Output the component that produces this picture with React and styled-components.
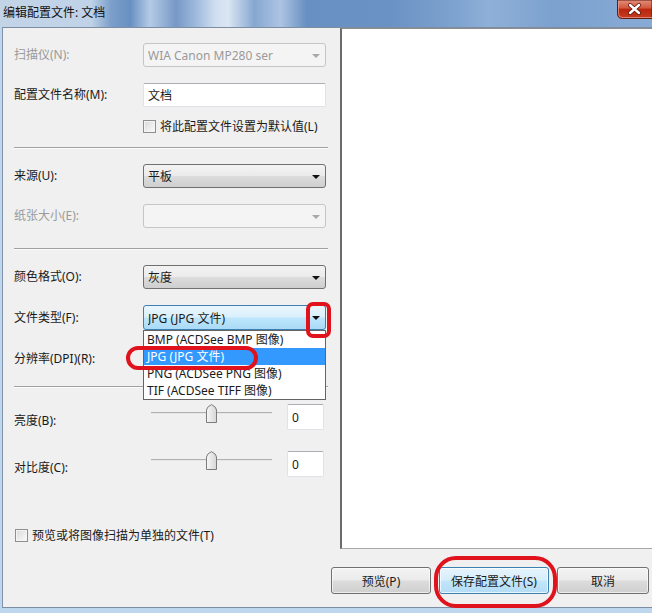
import React from 'react'
import styled, { createGlobalStyle, css } from 'styled-components'

const GlobalStyle = createGlobalStyle`
  html, body { margin: 0; padding: 0; background: #fff; }
  body {
    font-family: "Noto Sans", "Noto Sans CJK SC", sans-serif;
    font-size: 12px;
    color: #1a1a1a;
  }
`

const Window = styled.div`
  width: 652px;
  height: 613px;
  display: flex;
  flex-direction: column;
  background: #bfd6ef;
`

const TitleBar = styled.div`
  height: 27px;
  flex: none;
  display: flex;
  justify-content: space-between;
  padding-left: 3px;
  background: linear-gradient(90deg, #c3d4e7 0%, #bfd2e7 14%, #7c9fca 17%, #6890c2 20%, #b4cbe6 23%, #7798c6 27%, #9db9dc 30%, #cfdef0 33%, #dbe6f3 35%, #86a7d0 39%, #adc4e3 43%, #6890c2 47%, #6a92c4 60%, #7ea3cf 70%, #8fb0d8 75%, #7ca1ce 85%, #88abd6 100%);
`

const Title = styled.span`
  font-size: 12px;
  line-height: 26px;
  color: #111;
`

const CloseArt = styled.svg`
  display: block;
  flex: none;
`

const Client = styled.div`
  flex: 1;
  margin: 0 0 5px 2px;
  border-left: 1px solid #8193a8;
  border-top: 1px solid #7d8ea3;
  border-bottom: 1px solid #7d8ea3;
  background: #f0f0f0;
  display: grid;
  grid-template-columns: 337px 1fr;
  grid-template-rows: 521px 1fr;
`

const Form = styled.div`
  display: flex;
  flex-direction: column;
  padding: 15px 0 0 11px;
`

const Row = styled.div`
  position: relative;
  display: flex;
  align-items: center;
  height: ${p => p.$h || 24}px;
  margin-top: ${p => p.$mt || 0}px;
  flex: none;
`

const Label = styled.span`
  width: 129px;
  flex: none;
  white-space: nowrap;
  line-height: 16px;
  color: ${p => (p.$disabled ? '#9a9a9a' : '#1a1a1a')};
  padding-top: ${p => p.$pt || 0}px;
`

const comboLooks = {
  normal: css`
    border: 1px solid #707070;
    background: linear-gradient(180deg, #f3f3f3 0%, #ebebeb 48%, #dcdcdc 52%, #cfcfcf 100%);
    color: #1a1a1a;
  `,
  disabled: css`
    border: 1px solid #c3c6c9;
    background: #f4f4f4;
    color: #9a9a9a;
  `,
  hot: css`
    border: 1px solid #3c7fb1;
    background: linear-gradient(180deg, #eaf6fd 0%, #d9f0fc 48%, #bee6fd 52%, #a9daf6 100%);
    color: #1a1a1a;
  `,
}

const Combo = styled.div`
  width: 183px;
  height: 100%;
  box-sizing: border-box;
  border-radius: 3px;
  display: flex;
  align-items: center;
  padding: 0 0 0 4px;
  white-space: nowrap;
  ${p => comboLooks[p.$look || 'normal']}
`

const ComboText = styled.span`
  flex: 1;
  overflow: hidden;
`

const Arrow = styled.span`
  width: 0;
  height: 0;
  margin: 1px 5px 0 0;
  border-left: 4px solid transparent;
  border-right: 4px solid transparent;
  border-top: 4px solid ${p => (p.$disabled ? '#a8a8a8' : '#111')};
`

const TextBox = styled.div`
  width: ${p => p.$w || 183}px;
  height: 100%;
  box-sizing: border-box;
  background: #fff;
  border: 1px solid #dfe3e8;
  border-top-color: #abadb3;
  border-radius: 2px;
  display: flex;
  align-items: center;
  padding-left: 4px;
  color: #1a1a1a;
`

const Check = styled.span`
  width: 13px;
  height: 13px;
  box-sizing: border-box;
  flex: none;
  border: 1px solid #8e8f8f;
  background: linear-gradient(135deg, #d8d8d8 0%, #f2f2f2 70%, #fafafa 100%);
  box-shadow: inset 0 0 0 1px #f4f4f4;
  margin-right: 4px;
`

const CheckRow = styled(Row)`
  padding-left: ${p => p.$indent || 0}px;
`

const Separator = styled.div`
  width: 314px;
  height: 0;
  margin-top: ${p => p.$mt}px;
  border-top: 1px solid #a0a0a0;
  border-bottom: 1px solid #fcfcfc;
  flex: none;
`

const DropList = styled.div`
  position: absolute;
  top: 100%;
  left: 129px;
  width: 183px;
  box-sizing: border-box;
  background: #fff;
  border: 1px solid #646464;
  z-index: 2;
`

const DropItem = styled.div`
  height: 17px;
  line-height: 17px;
  padding-left: 3px;
  white-space: nowrap;
  background: ${p => (p.$selected ? '#3399ff' : 'transparent')};
  color: ${p => (p.$selected ? '#fff' : '#1a1a1a')};
`

const Slider = styled.div`
  width: 144px;
  height: 100%;
  flex: none;
  padding: 8px 0 0 8px;
  box-sizing: border-box;
`

const Track = styled.div`
  position: relative;
  width: 121px;
  height: 0;
  border-top: 1px solid #b0b0b0;
  border-bottom: 1px solid #e7e7e7;
`

const Thumb = styled.svg`
  position: absolute;
  left: 55px;
  top: -9px;
`

const Preview = styled.div`
  background: #fff;
  border-left: 2px solid #6b6b6b;
  border-top: 1px solid #8d8d8d;
  border-bottom: 1px solid #a8a8a8;
`

const ButtonRow = styled.div`
  grid-column: 1 / -1;
  display: flex;
  justify-content: flex-end;
  align-items: flex-start;
  gap: 8px;
  padding: 18px 3px 0 0;
`

const Button = styled.div`
  width: ${p => p.$w}px;
  height: 27px;
  box-sizing: border-box;
  border-radius: 3px;
  display: flex;
  align-items: center;
  justify-content: center;
  color: #1a1a1a;
  ${p =>
    p.$default
      ? css`
          border: 1px solid #3c7fb1;
          background: linear-gradient(180deg, #e6f4fc 0%, #d6eefb 48%, #c2e6fa 52%, #b4dcf4 100%);
          box-shadow: inset 0 0 0 1px rgba(255,255,255,0.7);
        `
      : css`
          border: 1px solid #707070;
          background: linear-gradient(180deg, #f3f3f3 0%, #ebebeb 48%, #dcdcdc 52%, #cfcfcf 100%);
          box-shadow: inset 0 0 0 1px rgba(255,255,255,0.6);
        `}
`

const Mark = styled.div`
  position: absolute;
  left: ${p => p.$x}px;
  top: ${p => p.$y}px;
  width: ${p => p.$w}px;
  height: ${p => p.$h}px;
  box-sizing: border-box;
  border: 4px solid #e0121c;
  border-radius: ${p => p.$r}px;
  z-index: 5;
  pointer-events: none;
`

const CloseIcon = () => (
  <CloseArt width="35" height="19" viewBox="0 0 35 19">
    <defs>
      <linearGradient id="closeFill" x1="0" y1="0" x2="0" y2="1">
        <stop offset="0" stopColor="#e48e7a" />
        <stop offset="0.42" stopColor="#d2593f" />
        <stop offset="0.52" stopColor="#b8260d" />
        <stop offset="1" stopColor="#c63e22" />
      </linearGradient>
    </defs>
    <path d="M0.5 0 L0.5 13.5 Q0.5 18.5 5.5 18.5 L35 18.5 L35 0 Z" fill="url(#closeFill)" stroke="#5e1c12" />
    <path d="M1.5 1 L1.5 13.5 Q1.5 17.5 5.5 17.5 L35 17.5" fill="none" stroke="#f0b2a5" strokeOpacity="0.6" />
    <path d="M13 5 L22 13 M22 5 L13 13" stroke="#5a1208" strokeWidth="4" strokeLinecap="round" />
    <path d="M13 5 L22 13 M22 5 L13 13" stroke="#fff" strokeWidth="2.4" strokeLinecap="round" />
  </CloseArt>
)

const SliderThumb = () => (
  <Thumb width="11" height="19" viewBox="0 0 11 19">
    <defs>
      <linearGradient id="thumbFill" x1="0" y1="0" x2="1" y2="0">
        <stop offset="0" stopColor="#f7f7f7" />
        <stop offset="1" stopColor="#d6d6d6" />
      </linearGradient>
    </defs>
    <path
      d="M0.5 18.5 L0.5 6 Q0.5 3 5.5 0.6 Q10.5 3 10.5 6 L10.5 18.5 Z"
      fill="url(#thumbFill)"
      stroke="#7b7b7b"
    />
  </Thumb>
)

const SliderRow = ({ label, mt }) => (
  <Row $h={26} $mt={mt}>
    <Label $pt={8}>{label}</Label>
    <Slider>
      <Track>
        <SliderThumb />
      </Track>
    </Slider>
    <TextBox $w={37}>0</TextBox>
  </Row>
)

const fileTypes = [
  'BMP (ACDSee BMP 图像)',
  'JPG (JPG 文件)',
  'PNG (ACDSee PNG 图像)',
  'TIF (ACDSee TIFF 图像)',
]

export default function App() {
  return (
    <>
      <GlobalStyle />
      <Window>
        <TitleBar>
          <Title>编辑配置文件: 文档</Title>
          <CloseIcon />
        </TitleBar>
        <Client>
          <Form>
            <Row>
              <Label $disabled>扫描仪(N):</Label>
              <Combo $look="disabled">
                <ComboText>WIA Canon MP280 ser</ComboText>
                <Arrow $disabled />
              </Combo>
            </Row>
            <Row $mt={16}>
              <Label>配置文件名称(M):</Label>
              <TextBox>文档</TextBox>
            </Row>
            <CheckRow $h={14} $mt={12} $indent={129}>
              <Check />
              <span>将此配置文件设置为默认值(L)</span>
            </CheckRow>
            <Separator $mt={14} />
            <Row $mt={15}>
              <Label>来源(U):</Label>
              <Combo>
                <ComboText>平板</ComboText>
                <Arrow />
              </Combo>
            </Row>
            <Row $mt={16}>
              <Label $disabled>纸张大小(E):</Label>
              <Combo $look="disabled">
                <ComboText />
                <Arrow $disabled />
              </Combo>
            </Row>
            <Separator $mt={20} />
            <Row $mt={15}>
              <Label>颜色格式(O):</Label>
              <Combo>
                <ComboText>灰度</ComboText>
                <Arrow />
              </Combo>
            </Row>
            <Row $h={25} $mt={16}>
              <Label>文件类型(F):</Label>
              <Combo $look="hot">
                <ComboText>JPG (JPG 文件)</ComboText>
                <Arrow />
              </Combo>
              <DropList>
                {fileTypes.map(t => (
                  <DropItem key={t} $selected={t.startsWith('JPG')}>
                    {t}
                  </DropItem>
                ))}
              </DropList>
            </Row>
            <Row $mt={17}>
              <Label>分辨率(DPI)(R):</Label>
              <Combo>
                <ComboText />
                <Arrow />
              </Combo>
            </Row>
            <Separator $mt={15} />
            <SliderRow label="亮度(B):" mt={16} />
            <SliderRow label="对比度(C):" mt={21} />
            <CheckRow $h={14} $mt={51} $indent={1}>
              <Check />
              <span>预览或将图像扫描为单独的文件(T)</span>
            </CheckRow>
          </Form>
          <Preview />
          <ButtonRow>
            <Button $w={100}>预览(P)</Button>
            <Button $w={110} $default>保存配置文件(S)</Button>
            <Button $w={92}>取消</Button>
          </ButtonRow>
        </Client>
        <Mark $x={306} $y={302} $w={25} $h={36} $r={7} />
        <Mark $x={126} $y={346} $w={132} $h={24} $r={12} />
        <Mark $x={434} $y={556} $w={123} $h={52} $r={22} />
      </Window>
    </>
  )
}
